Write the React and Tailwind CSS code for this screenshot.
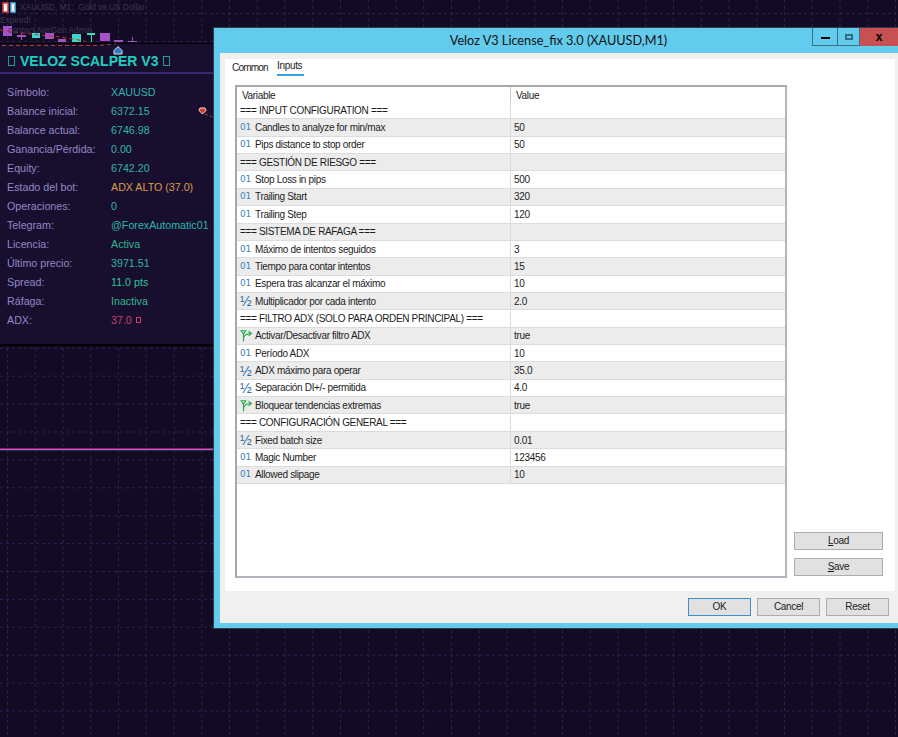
import React from "react";

const stats = [
  ["Símbolo:", "XAUUSD", "text-[#2fb5ab]"],
  ["Balance inicial:", "6372.15", "text-[#2fb5ab]"],
  ["Balance actual:", "6746.98", "text-[#2fb5ab]"],
  ["Ganancia/Pérdida:", "0.00", "text-[#2fb5ab]"],
  ["Equity:", "6742.20", "text-[#2fb5ab]"],
  ["Estado del bot:", "ADX ALTO (37.0)", "text-[#dd9a4c]"],
  ["Operaciones:", "0", "text-[#2fb5ab]"],
  ["Telegram:", "@ForexAutomatic01", "text-[#2fb5ab]"],
  ["Licencia:", "Activa", "text-[#2fb58f]"],
  ["Último precio:", "3971.51", "text-[#2fb5ab]"],
  ["Spread:", "11.0 pts", "text-[#2fc5a0]"],
  ["Ráfaga:", "Inactiva", "text-[#2fb58f]"],
  ["ADX:", "37.0", "text-[#c8406a]"],
];

const rows = [
  ["h", "=== INPUT CONFIGURATION ===", ""],
  ["i", "Candles to analyze for min/max", "50"],
  ["i", "Pips distance to stop order", "50"],
  ["h", "=== GESTIÓN DE RIESGO ===", ""],
  ["i", "Stop Loss in pips", "500"],
  ["i", "Trailing Start", "320"],
  ["i", "Trailing Step", "120"],
  ["h", "=== SISTEMA DE RAFAGA ===", ""],
  ["i", "Máximo de intentos seguidos", "3"],
  ["i", "Tiempo para contar intentos", "15"],
  ["i", "Espera tras alcanzar el máximo", "10"],
  ["f", "Multiplicador por cada intento", "2.0"],
  ["h", "=== FILTRO ADX (SOLO PARA ORDEN PRINCIPAL) ===", ""],
  ["b", "Activar/Desactivar filtro ADX", "true"],
  ["i", "Período ADX", "10"],
  ["f", "ADX máximo para operar", "35.0"],
  ["f", "Separación DI+/- permitida", "4.0"],
  ["b", "Bloquear tendencias extremas", "true"],
  ["h", "=== CONFIGURACIÓN GENERAL ===", ""],
  ["f", "Fixed batch size", "0.01"],
  ["i", "Magic Number", "123456"],
  ["i", "Allowed slipage", "10"],
];

const vx = Array.from({ length: 33 }, (_, i) => 7.5 + i * 27.75);
const hy = Array.from({ length: 27 }, (_, i) => 13.5 + i * 27.9);

function ChartDrawing() {
  const bodies = [
    [3, 26, 9, 10, "#a552c8"], [17, 35, 9, 2, "#a552c8"], [32, 33, 8, 5, "#3fd8c8"],
    [45, 33, 9, 6, "#a552c8"], [58, 39, 8, 3, "#a552c8"], [72, 34, 9, 8, "#3fd8c8"],
    [87, 33, 8, 2, "#3fd8c8"], [100, 33, 10, 8, "#a552c8"], [114, 40, 9, 2, "#a552c8"],
    [128, 41, 9, 1, "#a552c8"],
  ];
  return (
    <svg className="absolute inset-0" width="898" height="737">
      {vx.map((x) => (
        <line key={x} x1={x} x2={x} y1="0" y2="737" stroke="#2f2052" strokeDasharray="3 3" />
      ))}
      {hy.map((y) => (
        <line key={y} y1={y} y2={y} x1="0" x2="898" stroke="#2f2052" strokeDasharray="3 3" />
      ))}
      <line x1="21.5" x2="21.5" y1="33" y2="40" stroke="#a552c8" />
      <line x1="91.5" x2="91.5" y1="33" y2="42" stroke="#3fd8c8" />
      <line x1="132.5" x2="132.5" y1="37" y2="42" stroke="#a552c8" />
      {bodies.map(([x, y, w, h, c]) => (
        <rect key={x} x={x} y={y} width={w} height={h} fill={c} />
      ))}
      <path d="M0 30 L30 34 L60 37 L85 41" stroke="#b5392a" strokeDasharray="4 3" fill="none" />
      <rect x="0" y="448.5" width="213" height="1.5" fill="#e048c8" />
      <rect x="0" y="450" width="213" height="1" fill="#123c44" />
      <g fill="none" strokeWidth="1.5">
        <path d="M3 3 H8 V12 H3 Z" fill="#f4f4f8" stroke="#d84040" />
        <path d="M11 3 H15 V12 H11 Z" fill="#f4f4f8" stroke="#50b8e8" />
      </g>
    </svg>
  );
}

function BoolIcon() {
  return (
    <svg width="13" height="13" viewBox="0 0 13 13" className="shrink-0" fill="none" stroke="#22aa48" strokeWidth="1.1">
      <path d="M3.5 12.5 L3.5 5" />
      <path d="M1.2 1.8 L5.8 1.8 L3.5 5.2 Z" />
      <path d="M3.5 9 Q4.5 5 10 4.5" />
      <path d="M8.5 2.2 L11.5 4.5 L8.5 6.8" />
    </svg>
  );
}

function RowIcon({ kind }) {
  if (kind === "b") return <BoolIcon />;
  if (kind === "f")
    return <span className="w-[13px] shrink-0 text-[14px] tracking-normal leading-none text-[#2f6fa8]">½</span>;
  return <span className="w-[13px] shrink-0 text-[9px] tracking-[-0.3px] leading-none text-[#3a84c4] font-['DejaVu_Sans',sans-serif]">01</span>;
}

function WinButton({ children, className }) {
  return (
    <button className={`h-[18px] border border-[#adadad] bg-[#e1e1e1] text-[10px] tracking-[-0.33px] leading-none text-[#1c1c1c] ${className}`}>
      {children}
    </button>
  );
}

export default function App() {
  return (
    <div className="relative w-[898px] h-[737px] overflow-hidden bg-[#130a24] font-['Liberation_Sans',sans-serif]">
      <ChartDrawing />
      <div className="absolute left-[20px] top-[1px] text-[8.4px] leading-[12px] text-[#3f3559] whitespace-pre">XAUUSD, M1:  Gold vs US Dollar</div>
      <div className="absolute left-0 top-[15px] text-[8.4px] leading-[10px] text-[#3f3559] whitespace-pre">
        <div>Expired!</div>
        <div className="ml-[8px]">contact NerGen Admin</div>
      </div>

      {/* Stats panel */}
      <div className="absolute left-0 top-[43px] w-[213px] h-[303px] bg-[#180e2e] border-t border-t-black border-b-2 border-b-black pt-[6px]">
        <div className="flex items-center h-[22px] pl-[8px] gap-[5px] text-[14px] font-bold text-[#1fcfc0]">
          <span className="w-[7px] h-[10px] border border-[#1f9c94]" />
          <span>VELOZ SCALPER V3</span>
          <span className="w-[7px] h-[10px] border border-[#1f9c94]" />
        </div>
        <div className="h-[2px] bg-[#3a2672]" />
        <div className="mt-[9px] flex flex-col">
          {stats.map(([label, value, color]) => (
            <div key={label} className="flex h-[19px] items-center pl-[7px] text-[10.7px]">
              <span className="w-[104px] text-[#9488c8]">{label}</span>
              <span className={`flex items-center gap-[4px] ${color}`}>
                {value}
                {label === "ADX:" && <span className="w-[5px] h-[6px] border border-[#c8406a]" />}
              </span>
            </div>
          ))}
        </div>
      </div>
      <svg className="absolute left-0 top-[43px]" width="120" height="5" viewBox="0 0 120 5">
        <path d="M2 2.5 L98 2.5 L116 1" stroke="#b5392a" strokeDasharray="4 3" fill="none" />
      </svg>
      <svg className="absolute left-[113px] top-[46px]" width="10" height="10" viewBox="0 0 10 10">
        <path d="M5 0.5 L9 4.5 L9 8 L1 8 L1 4.5 Z" fill="#2f78c8" stroke="#dfe8f0" />
      </svg>
      <svg className="absolute left-[198px] top-[107px]" width="15" height="11" viewBox="0 0 15 11">
        <path d="M2 1 L7 1 L8 3.5 L4.5 7 L1 3.5 Z" fill="#d83828" stroke="#f0e0d8" />
        <path d="M7 7 L15 10" stroke="#b5392a" strokeDasharray="3 2" />
      </svg>

      {/* Dialog */}
      <div className="absolute left-[213px] top-[27px] w-[691px] h-[602px] bg-[#63cbec] border border-[#2c3e50] flex flex-col">
        <div className="relative h-[25px] shrink-0 flex items-center justify-center">
          <span className="text-[12.7px] text-[#111] font-['Lato',sans-serif]">Veloz V3 License_fix 3.0 (XAUUSD,M1)</span>
          <div className="absolute right-[5px] top-0 flex h-[18px]">
            <div className="w-[26px] border-x border-b border-[#3a6f85] flex items-center justify-center">
              <span className="w-[9px] h-[2px] mt-[2px] bg-black" />
            </div>
            <div className="w-[22px] border-r border-b border-[#3a6f85] flex items-center justify-center">
              <span className="w-[8px] h-[6px] border-2 border-[#2f6f86]" />
            </div>
            <div className="w-[38px] bg-[#c75050] flex items-center justify-center text-[12px] font-bold text-black">x</div>
          </div>
        </div>
        <div className="ml-[6px] bg-[#f0f0f0] h-[570px] pt-[6px] pl-[5px] flex flex-col">
          <div className="bg-white h-[532px] w-[670px] relative pl-[10px]">
            <div className="flex h-[26px] items-start gap-[8px] pt-[1px] text-[10px] tracking-[-0.33px] text-[#1c1c1c]">
              <span className="-ml-[3px] w-[37px] tracking-[-0.8px]">Common</span>
              <span className="border-b-2 border-[#3aa0e0] h-[16px] leading-[12px] w-[27px]">Inputs</span>
            </div>
            <div className="w-[552px] h-[493px] border-2 border-[#a8a8a8] border-b-[#b4b4bc] border-r-[#b4b4bc] text-[10px] tracking-[-0.33px] text-[#1c1c1c] flex flex-col">
              <div className="flex h-[15px] shrink-0 leading-[17px]">
                <span className="w-[273px] pl-[5px]">Variable</span>
                <span className="border-l border-[#c8c8c8] pl-[5px]">Value</span>
              </div>
              {rows.map(([kind, name, value], i) => (
                <div
                  key={name}
                  className={`flex h-[17.36px] shrink-0 items-center border-b border-[#dcdcdc] ${i % 2 ? "bg-[#ececec]" : "bg-white"}`}
                >
                  <div className={`w-[273px] flex items-center whitespace-nowrap ${kind === "h" ? "pl-[3px]" : "pl-[3px] gap-[2px]"}`}>
                    {kind !== "h" && <RowIcon kind={kind} />}
                    <span>{name}</span>
                  </div>
                  <div className="flex-1 h-full flex items-center border-l border-[#dcdcdc] pl-[3px]">{value}</div>
                </div>
              ))}
            </div>
            <div className="absolute left-[569px] top-[473px] flex flex-col gap-[8px]">
              <WinButton className="w-[89px]"><u>L</u>oad</WinButton>
              <WinButton className="w-[89px]"><u>S</u>ave</WinButton>
            </div>
          </div>
          <div className="flex gap-[6px] pl-[463px] pt-[7px]">
            <WinButton className="w-[63px] !border-[#3d8fd0]">OK</WinButton>
            <WinButton className="w-[63px]">Cancel</WinButton>
            <WinButton className="w-[63px]">Reset</WinButton>
          </div>
        </div>
      </div>
    </div>
  );
}
